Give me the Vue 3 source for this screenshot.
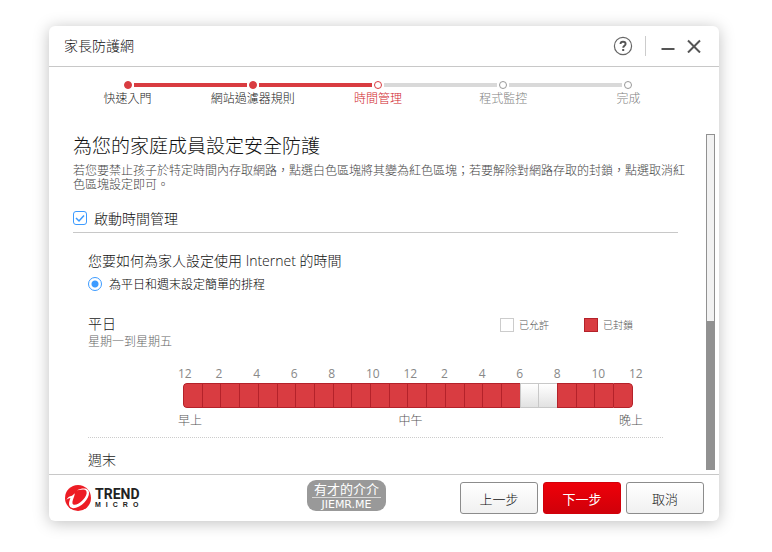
<script setup>
import { ref } from 'vue'

const steps = [
  { label: '快速入門', state: 'done' },
  { label: '網站過濾器規則', state: 'done' },
  { label: '時間管理', state: 'current' },
  { label: '程式監控', state: 'todo' },
  { label: '完成', state: 'todo' },
]

const hourLabels = [12, 2, 4, 6, 8, 10, 12, 2, 4, 6, 8, 10, 12]
const blocked = ref(Array.from({ length: 24 }, (_, hour) => hour !== 18 && hour !== 19))
const enabled = ref(true)
const schedule = ref('simple')

function toggle(hour) {
  blocked.value[hour] = !blocked.value[hour]
}
</script>

<template>
  <div class="desktop">
    <main class="window">
      <header class="titlebar">
        <span class="title">家長防護網</span>
        <div class="tools">
          <button type="button" class="tool help" aria-label="說明">
            <svg width="20" height="20" viewBox="0 0 20 20">
              <circle cx="10" cy="10" r="8.6" fill="none" stroke="#666" stroke-width="1.2" />
              <path d="M7.5 8.1C7.5 6.6 8.5 5.7 10 5.7S12.6 6.6 12.6 7.9C12.6 9.7 10.2 9.8 10.2 11.7" fill="none" stroke="#555" stroke-width="1.9" />
              <rect x="9.2" y="13" width="2" height="2" fill="#555" />
            </svg>
          </button>
          <span class="divider"></span>
          <button type="button" class="tool minimize" aria-label="最小化">
            <svg width="14" height="14" viewBox="0 0 14 14"><path d="M0.5 10H13.5" stroke="#555" stroke-width="2" /></svg>
          </button>
          <button type="button" class="tool" aria-label="關閉">
            <svg width="14" height="14" viewBox="0 0 14 14"><path d="M1 1.5L13 13.5M13 1.5L1 13.5" stroke="#555" stroke-width="2" /></svg>
          </button>
        </div>
      </header>

      <ol class="steps">
        <li v-for="step in steps" :key="step.label" :class="['step', step.state]">
          <div class="rail">
            <span class="line"></span>
            <span class="dot"></span>
            <span class="line"></span>
          </div>
          <span class="step-label">{{ step.label }}</span>
        </li>
      </ol>

      <div class="pane">
        <section class="content">
          <h1>為您的家庭成員設定安全防護</h1>
          <p class="intro">若您要禁止孩子於特定時間內存取網路，點選白色區塊將其變為紅色區塊；若要解除對網路存取的封鎖，點選取消紅色區塊設定即可。</p>

          <label class="enable">
            <span class="check">
              <input v-model="enabled" type="checkbox" />
              <svg v-if="enabled" width="14" height="14" viewBox="0 0 14 14"><path d="M3 7L6 10L11 4.5" fill="none" stroke="#3c9bff" stroke-width="1.5" /></svg>
            </span>
            啟動時間管理
          </label>

          <div class="settings">
            <h2>您要如何為家人設定使用 Internet 的時間</h2>
            <label class="choice">
              <input v-model="schedule" type="radio" name="schedule" value="simple" />
              為平日和週末設定簡單的排程
            </label>

            <div class="day-head">
              <div>
                <h3>平日</h3>
                <p class="range">星期一到星期五</p>
              </div>
              <ul class="legend">
                <li><span class="swatch"></span>已允許</li>
                <li><span class="swatch red"></span>已封鎖</li>
              </ul>
            </div>

            <div class="chart">
              <div class="hours">
                <span v-for="(label, i) in hourLabels" :key="i">{{ label }}</span>
              </div>
              <div class="bar">
                <button
                  v-for="(isBlocked, hour) in blocked"
                  :key="hour"
                  type="button"
                  :class="['cell', { blocked: isBlocked }]"
                  :aria-label="`${hour}:00`"
                  :aria-pressed="isBlocked"
                  @click="toggle(hour)"
                ></button>
              </div>
              <div class="periods"><span>早上</span><span>中午</span><span>晚上</span></div>
            </div>

            <h3 class="weekend">週末</h3>
          </div>
        </section>
        <div class="scrollbar"><div class="track"></div><div class="thumb"></div></div>
      </div>

      <footer class="footer">
        <div class="logo">
          <svg width="26" height="26" viewBox="0 0 26 26">
            <circle cx="13" cy="13" r="13" fill="#ed1c24" />
            <path d="M1.2 15.4C2.4 12.2 4.6 11 7 10.7L9.9 8.2L9.2 11.2L8 14.5C6.8 18.2 7.4 19.8 9.6 19.7C14 19.4 20.6 13.6 21.6 8.4C22 6 20.6 4.7 18.2 4.5L12 5.2C16.6 3 21.5 2.6 23.5 5.6C26 10.5 19.5 20.3 11 22.8C5.6 24.2 2.9 21.2 4.5 15.8L5.4 13.1C3.8 13.2 2.4 14 1.2 15.4Z" fill="#fff" />
          </svg>
          <div class="wordmark">
            <span class="trend">TREND</span>
            <span class="micro">MICRO</span>
          </div>
        </div>
        <div class="badge"><span class="badge-name">有才的介介</span><span class="badge-site">JIEMR.ME</span></div>
        <div class="actions">
          <button type="button" class="btn">上一步</button>
          <button type="button" class="btn primary">下一步</button>
          <button type="button" class="btn">取消</button>
        </div>
      </footer>
    </main>
  </div>
</template>

<style>
body {
  background: #fff;
}
</style>

<style scoped>
* {
  box-sizing: border-box;
}

.desktop {
  padding: 26px 53px 31px 49px;
  font-family: "Open Sans", "Noto Sans CJK TC", sans-serif;
  font-weight: 300;
  font-size: 12px;
  color: #111;
}

button {
  font-family: inherit;
  font-weight: inherit;
  padding: 0;
}

h1, h2, h3, p, ol, ul {
  margin: 0;
  padding: 0;
  list-style: none;
  font-weight: inherit;
}

.window {
  background: #fff;
  border-radius: 6px;
  box-shadow: 0 2px 16px rgba(0, 0, 0, 0.25);
}

.titlebar {
  display: flex;
  align-items: center;
  justify-content: space-between;
  height: 41px;
  padding: 0 18px 0 15px;
  border-bottom: 1px solid #c8c8c8;
}

.title {
  font-size: 14px;
  line-height: 20px;
}

.tools {
  display: flex;
  align-items: center;
}

.tool {
  display: flex;
  border: 0;
  background: none;
}

.divider {
  width: 1px;
  height: 20px;
  margin: 0 15px 0 12px;
  background: #ccc;
}

.minimize {
  margin-right: 12px;
}

.steps {
  display: grid;
  grid-template-columns: repeat(5, 1fr);
  padding: 14px 28px 0 16px;
}

.step {
  display: flex;
  flex-direction: column;
  align-items: center;
  color: #808080;
  line-height: 20px;
}

.rail {
  display: flex;
  align-items: center;
  gap: 2px;
  width: 100%;
}

.line {
  flex: 1;
  height: 4px;
  background: #d9d9d9;
}

.step:first-child .line:first-child,
.step:last-child .line:last-child {
  visibility: hidden;
}

.done .line,
.current .line:first-child {
  background: #d93c41;
}

.dot {
  width: 8px;
  height: 8px;
  border: 1px solid #999;
  border-radius: 50%;
}

.done .dot {
  background: #d93c41;
  border-color: #d93c41;
}

.current .dot {
  border-color: #d93c41;
}

.done .step-label {
  color: #222;
}

.current .step-label {
  color: #d0242b;
}

.pane {
  display: flex;
  justify-content: space-between;
  padding: 25px 4px 4px 24px;
}

.content {
  flex: 1;
  min-width: 0;
  padding-right: 20px;
}

h1 {
  font-size: 19px;
  line-height: 24px;
}

.intro {
  padding-top: 6px;
  line-height: 14px;
  color: #444;
}

.enable {
  display: flex;
  align-items: center;
  gap: 6px;
  height: 41px;
  margin-right: 8px;
  padding-top: 12px;
  border-bottom: 1px solid #c8c8c8;
  font-size: 14px;
}

.check {
  display: grid;
  width: 15px;
}

.check input,
.check svg {
  grid-area: 1 / 1;
}

.check input {
  appearance: none;
  width: 14px;
  height: 14px;
  margin: 0;
  border: 1px solid #3c9bff;
  border-radius: 3px;
}

.check svg {
  pointer-events: none;
}

.settings {
  padding: 18px 23px 0 15px;
}

h2 {
  font-size: 14px;
  line-height: 20px;
}

.choice {
  display: flex;
  align-items: center;
  gap: 7px;
  height: 26px;
  color: #000;
}

.choice input {
  appearance: none;
  width: 14px;
  height: 14px;
  margin: 0;
  border: 1px solid #3c9bff;
  border-radius: 50%;
}

.choice input:checked {
  background: radial-gradient(circle, #3c9bff 3px, transparent 4px);
}

.day-head {
  display: flex;
  justify-content: space-between;
  padding: 17px 30px 0 0;
}

h3 {
  font-size: 14px;
  line-height: 20px;
  color: #222;
}

.range {
  line-height: 16px;
  color: #666;
}

.legend {
  display: flex;
  gap: 35px;
  font-size: 10px;
  line-height: 14px;
  color: #555;
  padding-top: 4px;
}

.legend li {
  display: flex;
  gap: 5px;
  height: 14px;
}

.swatch {
  width: 14px;
  height: 14px;
  border: 1px solid #ccc;
}

.swatch.red {
  background: #d93c41;
  border-color: #b4222a;
}

.chart {
  margin-top: 15px;
  padding: 0 20px 7px 90px;
  color: #555;
}

.hours {
  display: grid;
  grid-template-columns: repeat(12, 1fr) 14px;
  font-weight: 400;
  line-height: 18px;
  color: #888;
}

.bar {
  display: flex;
  height: 25px;
  margin: 0 10px 4px 5px;
  border-radius: 4px;
  overflow: hidden;
}

.cell {
  flex: 1;
  min-width: 0;
  border: 1px solid #c8c8c8;
  border-right-width: 0;
  border-radius: 0;
  background: linear-gradient(#fff, #e2e2e2);
}

.cell.blocked {
  border-color: #b4222a;
  background: #d93c41;
}

.cell:first-child {
  border-radius: 4px 0 0 4px;
}

.cell:last-child {
  border-right-width: 1px;
  border-radius: 0 4px 4px 0;
}

.periods {
  display: flex;
  justify-content: space-between;
  line-height: 18px;
}

.weekend {
  padding-top: 12px;
  border-top: 1px dotted #ccc;
}

.scrollbar {
  display: flex;
  flex-direction: column;
  width: 9px;
}

.track {
  flex: 5;
  border: 1px solid #919191;
  border-bottom: 0;
  background: #f2f2f2;
}

.thumb {
  flex: 4;
  background: #919191;
}

.footer {
  display: flex;
  align-items: center;
  height: 47px;
  padding: 0 15px 0 16px;
  border-top: 1px solid #c8c8c8;
}

.logo {
  display: flex;
  align-items: center;
  gap: 4px;
}

.wordmark {
  display: flex;
  flex-direction: column;
  width: 47px;
  font-weight: 700;
  color: #222;
}

.trend {
  font-family: Roboto, sans-serif;
  font-size: 14px;
  line-height: 13px;
}

.micro {
  font-family: "Liberation Sans", sans-serif;
  font-size: 7px;
  line-height: 8px;
  letter-spacing: 5px;
}

.badge {
  display: flex;
  flex-direction: column;
  align-items: center;
  align-self: flex-start;
  width: 79px;
  height: 31px;
  margin: 5px 0 0 165px;
  padding: 1px 5px;
  border-radius: 9px;
  background: #999;
  color: #fff;
  font-weight: 400;
}

.badge-name {
  width: 100%;
  border-bottom: 1px solid #d8d8d8;
  font-size: 13px;
  line-height: 16px;
  text-align: center;
}

.badge-site {
  font-family: "DejaVu Sans", sans-serif;
  font-size: 11px;
  line-height: 13px;
}

.actions {
  display: flex;
  gap: 5px;
  margin-left: auto;
}

.btn {
  width: 78px;
  height: 32px;
  border: 1px solid #8c8c8c;
  border-radius: 3px;
  background: linear-gradient(#fff, #f0f0f0);
  color: #111;
  font-size: 13px;
}

.btn.primary {
  border-color: #d2000a;
  background: linear-gradient(#ee0009, #d0000a);
  color: #fff;
  font-weight: 400;
}
</style>
